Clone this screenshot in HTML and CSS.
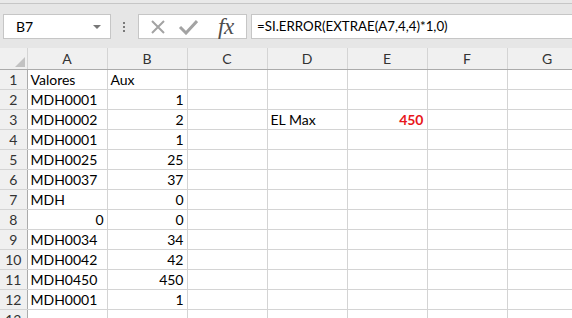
FILE: index.html
```html
<!DOCTYPE html>
<html lang="es">
  <head>
    <meta charset="UTF-8" />
    <title>Libro1 - Excel</title>
    <link rel="stylesheet" href="styles.css">
  </head>
  <body>
    <div class="top-strip"></div>
    <div class="formula-bar">
      <div class="name-box">
        <span>B7</span>
        <span class="drop"></span>
      </div>
      <div class="dots">
        <i></i><i></i><i></i>
      </div>
      <div class="fx-buttons">
        <svg class="btn-x" width="16" height="16" viewBox="0 0 16 16">
          <path d="M2 2 L14 14 M14 2 L2 14" stroke="#a3a3a3" stroke-width="2" fill="none" />
        </svg>
        <svg class="btn-ok" width="20" height="16" viewBox="0 0 20 16">
          <path d="M2 8 L8 14 L19 2" stroke="#a3a3a3" stroke-width="3" fill="none" />
        </svg>
        <span class="fx">fx</span>
      </div>
      <div class="formula">=SI.ERROR(EXTRAE(A7,4,4)*1,0)</div>
    </div>

    <table class="sheet">
      <colgroup>
        <col class="rh" />
        <col /><col /><col /><col /><col /><col /><col />
      </colgroup>
      <thead>
        <tr>
          <th class="corner"><span class="tri"></span></th>
          <th>A</th><th>B</th><th>C</th><th>D</th><th>E</th><th>F</th><th>G</th>
        </tr>
      </thead>
      <tbody>
        <tr><th>1</th><td>Valores</td><td>Aux</td><td></td><td></td><td></td><td></td><td></td></tr>
        <tr><th>2</th><td>MDH0001</td><td class="num">1</td><td></td><td></td><td></td><td></td><td></td></tr>
        <tr><th>3</th><td>MDH0002</td><td class="num">2</td><td></td><td>EL Max</td><td class="num max">450</td><td></td><td></td></tr>
        <tr><th>4</th><td>MDH0001</td><td class="num">1</td><td></td><td></td><td></td><td></td><td></td></tr>
        <tr><th>5</th><td>MDH0025</td><td class="num">25</td><td></td><td></td><td></td><td></td><td></td></tr>
        <tr><th>6</th><td>MDH0037</td><td class="num">37</td><td></td><td></td><td></td><td></td><td></td></tr>
        <tr><th>7</th><td>MDH</td><td class="num">0</td><td></td><td></td><td></td><td></td><td></td></tr>
        <tr><th>8</th><td class="num">0</td><td class="num">0</td><td></td><td></td><td></td><td></td><td></td></tr>
        <tr><th>9</th><td>MDH0034</td><td class="num">34</td><td></td><td></td><td></td><td></td><td></td></tr>
        <tr><th>10</th><td>MDH0042</td><td class="num">42</td><td></td><td></td><td></td><td></td><td></td></tr>
        <tr><th>11</th><td>MDH0450</td><td class="num">450</td><td></td><td></td><td></td><td></td><td></td></tr>
        <tr><th>12</th><td>MDH0001</td><td class="num">1</td><td></td><td></td><td></td><td></td><td></td></tr>
        <tr><th>13</th><td></td><td></td><td></td><td></td><td></td><td></td><td></td></tr>
      </tbody>
    </table>
  </body>
</html>
```

FILE: styles.css
```css
* {
  margin: 0;
  padding: 0;
  box-sizing: border-box;
}
body {
  width: 572px;
  height: 318px;
  overflow: hidden;
  background-color: #e6e6e6;
  font-family: Lato, "Liberation Sans", sans-serif;
  font-size: 14px;
  color: #000;
}
.top-strip {
  height: 4px;
  background-color: #e9e9e9;
  border-bottom: 1px solid #c6c6c6;
}
.formula-bar {
  display: flex;
  align-items: center;
  height: 44px;
  padding-top: 1px;
}
.name-box {
  display: flex;
  align-items: center;
  justify-content: space-between;
  width: 108px;
  height: 25px;
  margin-left: 3px;
  padding: 0 9px 0 12px;
  background-color: #fff;
  border: 1px solid #c6c6c6;
  font-size: 14px;
}
.drop {
  width: 0;
  height: 0;
  border-left: 4px solid transparent;
  border-right: 4px solid transparent;
  border-top: 4px solid #777;
}
.dots {
  display: flex;
  flex-direction: column;
  gap: 2px;
  margin-left: 12px;
  width: 2px;
}
.dots i {
  display: block;
  width: 2px;
  height: 2px;
  background-color: #7a7a7a;
}
.fx-buttons {
  display: flex;
  align-items: center;
  width: 109px;
  height: 25px;
  margin-left: 13px;
  padding-left: 11px;
  background-color: #fff;
  border: 1px solid #c6c6c6;
}
.btn-ok {
  margin-left: 12px;
}
.fx {
  margin-left: 20px;
  font-family: "Liberation Serif", serif;
  font-style: italic;
  font-size: 23px;
  color: #4d4d4d;
  letter-spacing: -0.5px;
  line-height: 1;
}
.formula {
  flex: 1;
  height: 25px;
  margin-left: 4px;
  padding-left: 5px;
  line-height: 23px;
  background-color: #fff;
  border: 1px solid #c6c6c6;
  border-right: none;
  white-space: nowrap;
  font-size: 13.3px;
}
.sheet {
  table-layout: fixed;
  border-collapse: collapse;
  width: 587px;
  background-color: #fff;
}
.sheet col {
  width: 80px;
}
.sheet col.rh {
  width: 27px;
}
.sheet thead th {
  height: 21px;
  background-color: #f0f0f0;
  border-left: 1px solid #d4d4d4;
  border-right: 1px solid #d4d4d4;
  border-bottom: 1px solid #ababab;
  font-weight: normal;
  color: #333;
  font-size: 14px;
}
.sheet thead th.corner {
  position: relative;
  border-left: none;
}
.tri {
  position: absolute;
  right: 2px;
  bottom: 2px;
  width: 0;
  height: 0;
  border-left: 10px solid transparent;
  border-bottom: 10px solid #c2c2c2;
}
.sheet tbody th {
  height: 20px;
  background-color: #f0f0f0;
  border-bottom: 1px solid #d4d4d4;
  border-right: 1px solid #ababab;
  font-weight: normal;
  color: #333;
  font-size: 14px;
}
.sheet td {
  height: 20px;
  padding: 0 3px;
  border: 1px solid #d4d4d4;
  white-space: nowrap;
  overflow: hidden;
}
.sheet td.num {
  text-align: right;
}
.sheet td.max {
  color: #e8161b;
  font-weight: bold;
}
```
